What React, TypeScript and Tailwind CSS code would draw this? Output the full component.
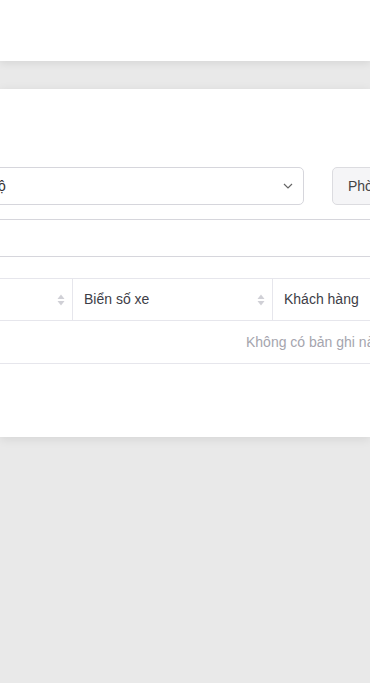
import React from 'react';

function SortIcon() {
  return (
    <svg width="8" height="12" viewBox="0 0 8 12" className="shrink-0">
      <path d="M4 0.5 L7.5 5 L0.5 5 Z" fill="#d0d0d6" />
      <path d="M4 11.5 L7.5 7 L0.5 7 Z" fill="#d0d0d6" />
    </svg>
  );
}

export default function App() {
  return (
    <div className="h-[683px] w-[370px] overflow-hidden bg-[#e9e9e9] font-['Liberation_Sans',Arial,sans-serif]">
      {/* top bar */}
      <div className="relative z-10 h-[61px] bg-white shadow-[0_2px_8px_rgba(0,0,0,0.09)]" />

      <div className="pt-[28px]">
        {/* card, scrolled sideways */}
        <div className="h-[348px] overflow-hidden bg-white shadow-[0_2px_10px_rgba(0,0,0,0.09)]">
          <div className="pt-[78px]">
            {/* filters */}
            <div className="flex items-center">
              <div className="-ml-[200px] flex h-[38px] w-[504px] shrink-0 items-center justify-between rounded-[5px] border border-[#d6d6dc] pl-[155px] pr-[10px] text-[14px] text-[#333]">
                <span>Toàn bộ</span>
                <svg width="10" height="6" viewBox="0 0 10 6">
                  <path d="M1 1 L5 5 L9 1" fill="none" stroke="#666" strokeWidth="1.2" />
                </svg>
              </div>
              <div className="ml-[28px] flex h-[38px] w-[120px] shrink-0 items-center rounded-[5px] border border-[#dcdce0] bg-[#f5f5f7] pl-[15px] text-[14px] text-[#444]">
                Phòng ban
              </div>
            </div>

            {/* search box */}
            <div className="mt-[14px] h-[38px] border-y border-[#d6d6dc]" />

            {/* table */}
            <div className="mt-[21px] w-[600px] text-[14px]">
              <div className="flex h-[43px] border-y border-[#e6e6ec] text-[#3d3d46]">
                <div className="flex w-[73px] shrink-0 items-center justify-end border-r border-[#e6e6ec] pr-[7px]">
                  <SortIcon />
                </div>
                <div className="flex w-[200px] shrink-0 items-center justify-between border-r border-[#e6e6ec] pl-[11px] pr-[7px]">
                  <span>Biển số xe</span>
                  <SortIcon />
                </div>
                <div className="flex flex-1 items-center pl-[11px]">
                  <span>Khách hàng</span>
                </div>
              </div>
              <div className="flex h-[43px] items-center border-b border-[#e6e6ec] pl-[246px] text-[#a5a5ae]">
                Không có bản ghi nào
              </div>
            </div>
          </div>
        </div>
      </div>
    </div>
  );
}
